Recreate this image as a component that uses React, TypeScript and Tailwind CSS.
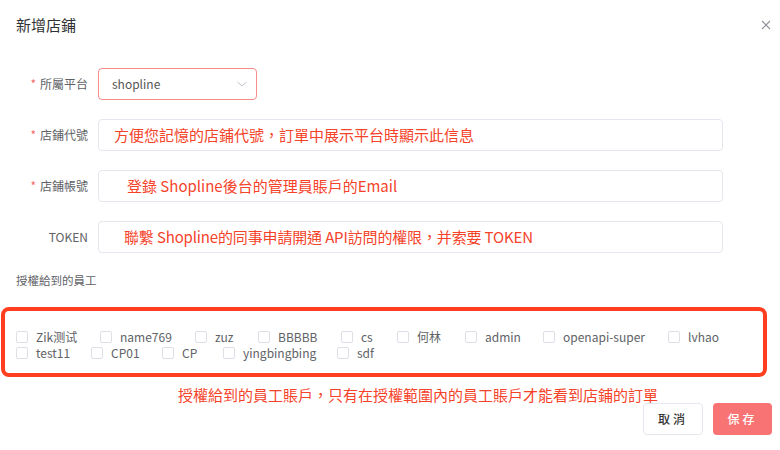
import React from "react";

const row1: [string, string][] = [
  ["Zik测试", "w-[84px]"],
  ["name769", "w-[95px]"],
  ["zuz", "w-[63px]"],
  ["BBBBB", "w-[83px]"],
  ["cs", "w-[56px]"],
  ["何林", "w-[68px]"],
  ["admin", "w-[78px]"],
  ["openapi-super", "w-[125px]"],
  ["lvhao", "w-[60px]"],
];
const row2: [string, string][] = [
  ["test11", "w-[75px]"],
  ["CP01", "w-[71px]"],
  ["CP", "w-[61px]"],
  ["yingbingbing", "w-[114px]"],
  ["sdf", "w-[60px]"],
];

function Item({ label, w }: { label: string; w: string }) {
  return (
    <div className={"flex items-center shrink-0 " + w}>
      <span className="w-[12px] h-[12px] border border-[#dcdfe6] rounded-[2px] bg-white shrink-0" />
      <span className="ml-[8px] text-[12px] text-[#606266] leading-[16px] whitespace-nowrap">{label}</span>
    </div>
  );
}

function Label({ text, required }: { text: string; required?: boolean }) {
  return (
    <div className="w-[88px] text-right text-[12px] text-[#606266]">
      {required && <span className="text-[#f56c6c] mr-[4px]">*</span>}
      {text}
    </div>
  );
}

export default function App() {
  return (
    <div
      className="w-[780px] h-[450px] bg-white overflow-hidden"
      style={{ fontFamily: '"Noto Sans CJK TC", "Noto Sans CJK SC", sans-serif' }}
    >
      <div className="flex items-center justify-between pt-[16px] pl-[16px] pr-[9px]">
        <div className="text-[15px] leading-[18px] text-[#303133]">新增店鋪</div>
        <svg width="10" height="10" viewBox="0 0 10 10" className="text-[#909399]">
          <path d="M1 1L9 9M9 1L1 9" stroke="currentColor" strokeWidth="1.1" />
        </svg>
      </div>

      <div className="mt-[34px] flex items-center h-[32px]">
        <Label text="所屬平台" required />
        <div className="ml-[10px] w-[159px] h-[32px] border border-[#f78a8a] rounded-[4px] flex items-center justify-between pl-[13px] pr-[8px]">
          <span className="text-[12px] text-[#555]">shopline</span>
          <svg width="12" height="8" viewBox="0 0 12 8">
            <path d="M1.5 2L6 6L10.5 2" fill="none" stroke="#c0c4cc" strokeWidth="1" />
          </svg>
        </div>
      </div>

      <div className="mt-[19px] flex items-center h-[32px]">
        <Label text="店鋪代號" required />
        <div className="ml-[10px] w-[625px] h-[32px] border border-[#e4e7ed] rounded-[4px] flex items-center pl-[15px]">
          <span className="text-[15px] text-[#f5432a]">方便您記憶的店鋪代號，訂單中展示平台時顯示此信息</span>
        </div>
      </div>

      <div className="mt-[19px] flex items-center h-[32px]">
        <Label text="店鋪帳號" required />
        <div className="ml-[10px] w-[625px] h-[32px] border border-[#e4e7ed] rounded-[4px] flex items-center pl-[28px]">
          <span className="text-[15px] text-[#f5432a]">登錄 Shopline後台的管理員賬戶的Email</span>
        </div>
      </div>

      <div className="mt-[19px] flex items-center h-[32px]">
        <Label text="TOKEN" />
        <div className="ml-[10px] w-[625px] h-[32px] border border-[#e4e7ed] rounded-[4px] flex items-center pl-[25px]">
          <span className="text-[15px] text-[#f5432a] tracking-[-0.15px]">聯繫 Shopline的同事申請開通 API訪問的權限，并索要 TOKEN</span>
        </div>
      </div>

      <div className="mt-[19px] pl-[16px] text-[11.5px] leading-[16px] text-[#606266]">授權給到的員工</div>

      <div className="mt-[19px] ml-[1px] w-[766px] border-4 border-[#ff3d1f] rounded-[8px] pt-[18px] pb-[12px] pl-[11px]">
        <div className="flex items-center h-[16px]">
          {row1.map(([l, w]) => (
            <Item key={l} label={l} w={w} />
          ))}
        </div>
        <div className="flex items-center h-[16px]">
          {row2.map(([l, w]) => (
            <Item key={l} label={l} w={w} />
          ))}
        </div>
      </div>

      <div className="mt-[9px] pl-[178px] text-[15px] leading-[17px] text-[#f5432a]">
        授權給到的員工賬戶，只有在授權範圍內的員工賬戶才能看到店鋪的訂單
      </div>

      <div className="flex justify-end pr-[8px] gap-[10px]">
        <button className="w-[60px] h-[32px] border border-[#e4e7ed] rounded-[4px] bg-white text-[12px] text-[#333] tracking-[3px] font-medium">
          取消
        </button>
        <button className="w-[59px] h-[32px] rounded-[4px] bg-[#f87373] text-[12px] text-white tracking-[3px] font-medium">
          保存
        </button>
      </div>
    </div>
  );
}
